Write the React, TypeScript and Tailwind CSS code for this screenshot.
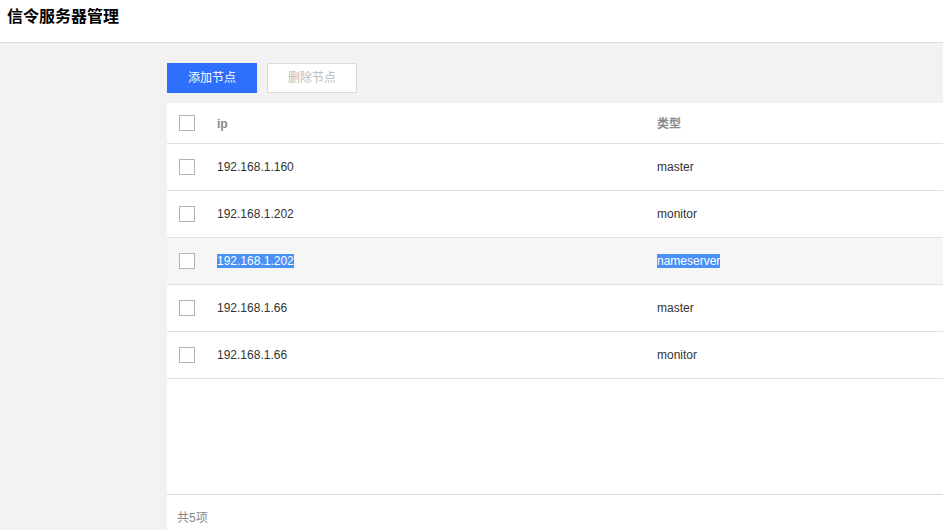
const rows = [
  { ip: '192.168.1.160', type: 'master' },
  { ip: '192.168.1.202', type: 'monitor' },
  { ip: '192.168.1.202', type: 'nameserver', selected: true },
  { ip: '192.168.1.66', type: 'master' },
  { ip: '192.168.1.66', type: 'monitor' },
];

const Checkbox = () => (
  <span className="block w-4 h-4 border border-[#b3b3b3] bg-white"></span>
);

export default function App() {
  return (
    <div
      className="w-[943px] h-[530px] overflow-hidden bg-[#f2f2f2] flex flex-col"
      style={{ fontFamily: '"Liberation Sans", "Noto Sans CJK SC", sans-serif' }}
    >
      {/* 顶部标题 */}
      <div className="h-[43px] shrink-0 bg-white border-b border-[#dcdcdc] flex items-center px-[7px]">
        <h1 className="text-[16px] font-bold text-black leading-none -mt-[9px]">信令服务器管理</h1>
      </div>

      <div className="flex-1 pl-[167px] pt-5 flex flex-col">
        <div className="flex gap-[10px] h-[30px]">
          <button className="w-[90px] h-[30px] bg-[#2e6ffc] text-white text-[12px]">添加节点</button>
          <button className="w-[90px] h-[30px] bg-white border border-[#dcdcdc] text-[#bbbbbb] text-[12px]">删除节点</button>
        </div>

        <div className="mt-[10px] flex-1 bg-white flex flex-col">
          <div className="h-[41px] flex items-center border-b border-[#e0e0e0] text-[12px] font-bold text-[#888]">
            <div className="w-[50px] pl-3"><Checkbox /></div>
            <div className="w-[440px] pt-px">ip</div>
            <div className="pt-px">类型</div>
          </div>
          {rows.map((r, i) => (
            <div
              key={i}
              className={`h-[47px] flex items-center border-b border-[#e0e0e0] text-[12px] text-[#333] ${r.selected ? 'bg-[#f6f6f6]' : ''}`}
            >
              <div className="w-[50px] pl-3"><Checkbox /></div>
              <div className="w-[440px]">
                {r.selected ? <span className="bg-[#4a90f5] text-white">{r.ip}</span> : r.ip}
              </div>
              <div>
                {r.selected ? <span className="bg-[#4a90f5] text-white">{r.type}</span> : r.type}
              </div>
            </div>
          ))}
          <div className="flex-1 border-b border-[#dcdcdc]"></div>
          <div className="h-[35px] shrink-0 pl-[10px] pt-[14px] text-[12px] text-[#888]">共5项</div>
        </div>
      </div>
    </div>
  );
}
